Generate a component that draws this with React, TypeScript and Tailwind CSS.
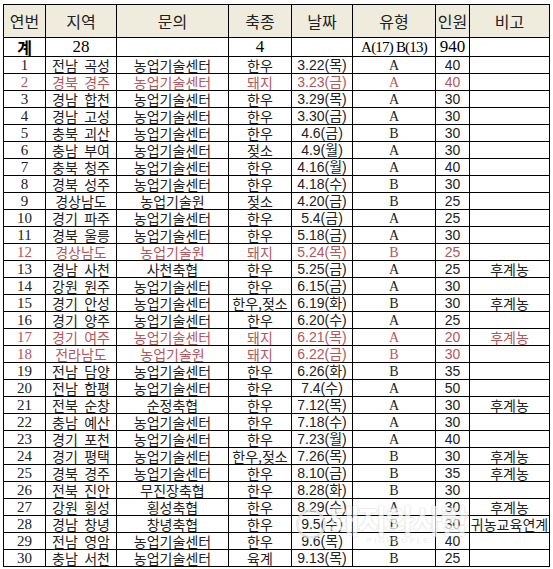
import React from "react"

type Row = {
  no: number
  region: string
  org: string
  kind: string
  date: string
  type: string
  count: number
  note?: string
  red?: boolean
}

const rows: Row[] = [
  { no: 1, region: "전남  곡성", org: "농업기술센터", kind: "한우", date: "3.22(목)", type: "A", count: 40 },
  { no: 2, region: "경북  경주", org: "농업기술센터", kind: "돼지", date: "3.23(금)", type: "A", count: 40, red: true },
  { no: 3, region: "경남  합천", org: "농업기술센터", kind: "한우", date: "3.29(목)", type: "A", count: 30 },
  { no: 4, region: "경남  고성", org: "농업기술센터", kind: "한우", date: "3.30(금)", type: "A", count: 30 },
  { no: 5, region: "충북  괴산", org: "농업기술센터", kind: "한우", date: "4.6(금)", type: "B", count: 30 },
  { no: 6, region: "충남  부여", org: "농업기술센터", kind: "젖소", date: "4.9(월)", type: "A", count: 30 },
  { no: 7, region: "충북  청주", org: "농업기술센터", kind: "한우", date: "4.16(월)", type: "A", count: 40 },
  { no: 8, region: "경북  성주", org: "농업기술센터", kind: "한우", date: "4.18(수)", type: "B", count: 30 },
  { no: 9, region: "경상남도", org: "농업기술원", kind: "젖소", date: "4.20(금)", type: "B", count: 25 },
  { no: 10, region: "경기  파주", org: "농업기술센터", kind: "한우", date: "5.4(금)", type: "A", count: 25 },
  { no: 11, region: "경북  울릉", org: "농업기술센터", kind: "한우", date: "5.18(금)", type: "A", count: 30 },
  { no: 12, region: "경상남도", org: "농업기술원", kind: "돼지", date: "5.24(목)", type: "B", count: 25, red: true },
  { no: 13, region: "경남  사천", org: "사천축협", kind: "한우", date: "5.25(금)", type: "A", count: 25, note: "후계농" },
  { no: 14, region: "강원  원주", org: "농업기술센터", kind: "한우", date: "6.15(금)", type: "A", count: 30 },
  { no: 15, region: "경기  안성", org: "농업기술센터", kind: "한우,젖소", date: "6.19(화)", type: "B", count: 30, note: "후계농" },
  { no: 16, region: "경기  양주", org: "농업기술센터", kind: "한우", date: "6.20(수)", type: "A", count: 25 },
  { no: 17, region: "경기  여주", org: "농업기술센터", kind: "돼지", date: "6.21(목)", type: "A", count: 20, note: "후계농", red: true },
  { no: 18, region: "전라남도", org: "농업기술원", kind: "돼지", date: "6.22(금)", type: "B", count: 30, red: true },
  { no: 19, region: "전남  담양", org: "농업기술센터", kind: "한우", date: "6.26(화)", type: "B", count: 35 },
  { no: 20, region: "전남  함평", org: "농업기술센터", kind: "한우", date: "7.4(수)", type: "A", count: 50 },
  { no: 21, region: "전북  순창", org: "순정축협", kind: "한우", date: "7.12(목)", type: "A", count: 30, note: "후계농" },
  { no: 22, region: "충남  예산", org: "농업기술센터", kind: "한우", date: "7.18(수)", type: "A", count: 30 },
  { no: 23, region: "경기  포천", org: "농업기술센터", kind: "한우", date: "7.23(월)", type: "A", count: 40 },
  { no: 24, region: "경기  평택", org: "농업기술센터", kind: "한우,젖소", date: "7.26(목)", type: "B", count: 30, note: "후계농" },
  { no: 25, region: "경북  경주", org: "농업기술센터", kind: "한우", date: "8.10(금)", type: "B", count: 35, note: "후계농" },
  { no: 26, region: "전북  진안", org: "무진장축협", kind: "한우", date: "8.28(화)", type: "B", count: 30 },
  { no: 27, region: "강원  횡성", org: "횡성축협", kind: "한우", date: "8.29(수)", type: "A", count: 30, note: "후계농" },
  { no: 28, region: "경남  창녕", org: "창녕축협", kind: "한우", date: "9.5(수)", type: "B", count: 30, note: "귀농교육연계" },
  { no: 29, region: "전남  영암", org: "농업기술센터", kind: "한우", date: "9.6(목)", type: "B", count: 40 },
  { no: 30, region: "충남  서천", org: "농업기술센터", kind: "육계", date: "9.13(목)", type: "B", count: 25 },
]

const cell = "border border-black text-center p-0 whitespace-pre"
// korean columns use the CJK font a bit bigger, like the gulim text in the source
const ko = " font-['Noto_Sans_CJK_KR',sans-serif] text-[14px] leading-[16px]"

export default function App() {
  return (
    <div className="relative w-[553px] h-[569px] bg-white pl-[3px] pt-[4px] overflow-hidden font-['Liberation_Sans','Noto_Sans_CJK_KR',sans-serif] text-[#222]">
      <table className="table-fixed border-collapse border border-black w-[546px]">
        <colgroup>
          <col className="w-[42px]" />
          <col className="w-[71px]" />
          <col className="w-[112px]" />
          <col className="w-[63px]" />
          <col className="w-[61px]" />
          <col className="w-[83px]" />
          <col className="w-[34px]" />
          <col className="w-[80px]" />
        </colgroup>
        <thead>
          <tr className="h-[33px] bg-[#efebdd] text-[16px] leading-[18px] font-['Noto_Sans_CJK_KR',sans-serif]">
            <th className={cell + " font-normal"}>연번</th>
            <th className={cell + " font-normal"}>지역</th>
            <th className={cell + " font-normal"}>문의</th>
            <th className={cell + " font-normal"}>축종</th>
            <th className={cell + " font-normal"}>날짜</th>
            <th className={cell + " font-normal"}>유형</th>
            <th className={cell + " font-normal"}>인원</th>
            <th className={cell + " font-normal"}>비고</th>
          </tr>
        </thead>
        <tbody>
          <tr className="h-[19px] text-[17px] leading-[18px] font-['Liberation_Serif','Noto_Sans_CJK_KR',serif] text-black">
            <td className={cell + " font-['Noto_Sans_CJK_KR',sans-serif] font-bold text-[16px]"}>계</td>
            <td className={cell}>28</td>
            <td className={cell}></td>
            <td className={cell}>4</td>
            <td className={cell}></td>
            <td className={cell + " text-[15px] tracking-[-0.8px]"}>A(17) B(13)</td>
            <td className={cell}>940</td>
            <td className={cell}></td>
          </tr>
          {rows.map((r) => (
            <tr
              key={r.no}
              className={
                "h-[17px] text-[13px] leading-[15px] " + (r.red ? "text-[#b4565c]" : "text-[#222]")
              }
            >
              <td className={cell + " font-['Liberation_Serif',serif] text-[15px]"}>{r.no}</td>
              <td className={cell + ko}>{r.region}</td>
              <td className={cell + ko}>{r.org}</td>
              <td className={cell + ko}>{r.kind}</td>
              <td className={cell + " text-[14px]"}>{r.date}</td>
              <td className={cell + " font-['Liberation_Serif',serif] text-[14px]"}>{r.type}</td>
              <td className={cell + " text-[14px]"}>{r.count}</td>
              <td className={cell + ko}>{r.note ?? ""}</td>
            </tr>
          ))}
        </tbody>
      </table>
      <div className="pointer-events-none absolute left-[296px] top-[502px] flex items-center gap-1 text-white opacity-70">
        <div className="w-[30px] h-[30px] rounded-full border-[3px] border-[#e0e0e0]" />
        <div className="flex flex-col items-center">
          <span className="text-[32px] leading-[34px] font-bold font-['Noto_Sans_CJK_KR',sans-serif] [text-shadow:0_0_2px_#aaa] tracking-[-2px]">
            돼지와사람
          </span>
          <span className="text-[8px] leading-[9px] tracking-[2px] text-[#e4e4e4] font-['Liberation_Sans',sans-serif]">
            PIGPEOPLE
          </span>
        </div>
      </div>
    </div>
  )
}
